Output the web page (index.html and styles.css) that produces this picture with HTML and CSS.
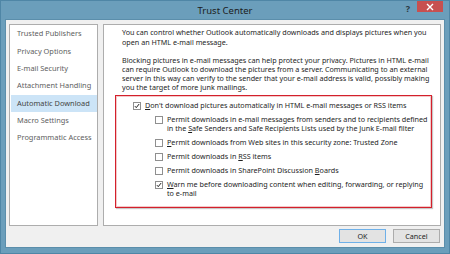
FILE: index.html
```html
<!DOCTYPE html>
<html lang="en">
<head>
    <meta charset="UTF-8" />
    <title>Trust Center</title>
    <link rel="stylesheet" href="styles.css">
</head>
<body>
    <div class="window">
        <div class="titlebar">
            <span class="title">Trust Center</span>
            <span class="help-btn">?</span>
            <span class="close-btn">
                <svg width="8" height="8" viewBox="0 0 8 8"><path d="M1 1 L7 7 M7 1 L1 7" stroke="#fff" stroke-width="1.4"/></svg>
            </span>
        </div>
        <div class="client">
            <div class="panes">
                <ul class="sidebar">
                    <li>Trusted Publishers</li>
                    <li>Privacy Options</li>
                    <li>E-mail Security</li>
                    <li>Attachment Handling</li>
                    <li class="selected">Automatic Download</li>
                    <li>Macro Settings</li>
                    <li>Programmatic Access</li>
                </ul>
                <div class="main">
                    <p class="intro">You can control whether Outlook automatically downloads and displays pictures when you<br>open an HTML e-mail message.</p>
                    <p class="intro second">Blocking pictures in e-mail messages can help protect your privacy. Pictures in HTML e-mail<br>can require Outlook to download the pictures from a server. Communicating to an external<br>server in this way can verify to the sender that your e-mail address is valid, possibly making<br>you the target of more junk mailings.</p>

                    <div class="highlight">
                        <div class="option">
                            <span class="checkbox checked"><svg width="8" height="8" viewBox="0 0 8 8"><path d="M1.2 4.2 L3 6.2 L6.8 1.4" fill="none" stroke="#1a1a1a" stroke-width="1.3"/></svg></span>
                            <span class="label"><u>D</u>on't download pictures automatically in HTML e-mail messages or RSS items</span>
                        </div>
                        <div class="option sub">
                            <span class="checkbox"></span>
                            <span class="label">Permit downloads in e-mail messages from senders and to recipients defined<br>in the <u>S</u>afe Senders and Safe Recipients Lists used by the Junk E-mail filter</span>
                        </div>
                        <div class="option sub">
                            <span class="checkbox"></span>
                            <span class="label"><u>P</u>ermit downloads from Web sites in this security zone: Trusted Zone</span>
                        </div>
                        <div class="option sub">
                            <span class="checkbox"></span>
                            <span class="label">Permit downloads in <u>R</u>SS items</span>
                        </div>
                        <div class="option sub">
                            <span class="checkbox"></span>
                            <span class="label">Permit downloads in SharePoint Discussion <u>B</u>oards</span>
                        </div>
                        <div class="option sub">
                            <span class="checkbox checked"><svg width="8" height="8" viewBox="0 0 8 8"><path d="M1.2 4.2 L3 6.2 L6.8 1.4" fill="none" stroke="#1a1a1a" stroke-width="1.3"/></svg></span>
                            <span class="label"><u>W</u>arn me before downloading content when editing, forwarding, or replying<br>to e-mail</span>
                        </div>
                    </div>
                </div>
            </div>
            <div class="buttons">
                <button class="btn default">OK</button>
                <button class="btn">Cancel</button>
            </div>
        </div>
    </div>
</body>
</html>
```

FILE: styles.css
```css
body {
    margin: 0;
    width: 450px;
    height: 254px;
    overflow: hidden;
    font-family: "Noto Sans", "Open Sans", sans-serif;
    font-size: 7.2px;
}
.window {
    position: relative;
    width: 450px;
    height: 254px;
    box-sizing: border-box;
    background: #6b9ebb;
    border: 1px solid #4f86a6;
    padding: 0 4px 5px 4px;
    display: flex;
    flex-direction: column;
}
.titlebar {
    height: 18px;
    display: flex;
    align-items: center;
    justify-content: center;
}
.title {
    font-size: 9.5px;
    color: #1c1c1c;
}
.help-btn {
    position: absolute;
    top: 1px;
    right: 39px;
    font-size: 9px;
    font-weight: bold;
    color: #2a3a44;
}
.close-btn {
    position: absolute;
    top: 0;
    right: 6px;
    width: 26px;
    height: 11px;
    background: #c75050;
    display: flex;
    align-items: center;
    justify-content: center;
}
.client {
    flex: 1;
    background: #f0f0f0;
    border: 1px solid #5b8eab;
    display: flex;
    flex-direction: column;
}
.panes {
    display: flex;
    gap: 5px;
    padding: 4px 3px 0 3px;
    height: 202px;
}
.sidebar {
    list-style: none;
    margin: 0;
    width: 89px;
    box-sizing: border-box;
    background: #fff;
    border: 1px solid #adadad;
    padding: 0.35px 0 0 1px;
}
.sidebar li {
    height: 17.3px;
    line-height: 17.3px;
    padding-left: 6px;
    font-size: 7.4px;
    color: #5e5e5e;
    white-space: nowrap;
}
.sidebar li.selected {
    background: #cce4f7;
    color: #444;
}
.main {
    flex: 1;
    background: #fff;
    border: 1px solid #adadad;
    padding: 3.3px 8px 0 11px;
}
.intro {
    margin: 0 0 0 7px;
    line-height: 9.2px;
    color: #1e1e1e;
    white-space: nowrap;
}
.intro.second {
    margin-top: 9px;
}
.highlight {
    margin-top: 2px;
    height: 113px;
    box-sizing: border-box;
    border: 1px solid #d3202c;
    box-shadow: inset 0 0 0 1px #f4c8c8, 1px 1px 1px #c8c8c8;
    padding: 5.4px 0 0 17px;
}
.option {
    display: flex;
    align-items: flex-start;
    line-height: 9.2px;
    color: #1e1e1e;
    white-space: nowrap;
}
.option + .option {
    margin-top: 4.8px;
}
.option.sub {
    padding-left: 22px;
}
.checkbox {
    width: 8px;
    height: 8px;
    box-sizing: border-box;
    border: 1px solid #8f8f8f;
    background: #fff;
    margin-top: 0.6px;
    margin-right: 4px;
    display: flex;
    align-items: center;
    justify-content: center;
    flex-shrink: 0;
}
.checkbox svg {
    display: block;
}
.buttons {
    display: flex;
    justify-content: flex-end;
    gap: 7px;
    padding: 3px 4px 0 0;
}
.btn {
    width: 47px;
    height: 14px;
    padding: 0;
    font-family: inherit;
    font-size: 7.2px;
    color: #1e1e1e;
    background: #e3e3e3;
    border: 1px solid #acacac;
}
.btn.default {
    border-color: #6fb0e8;
}
```
